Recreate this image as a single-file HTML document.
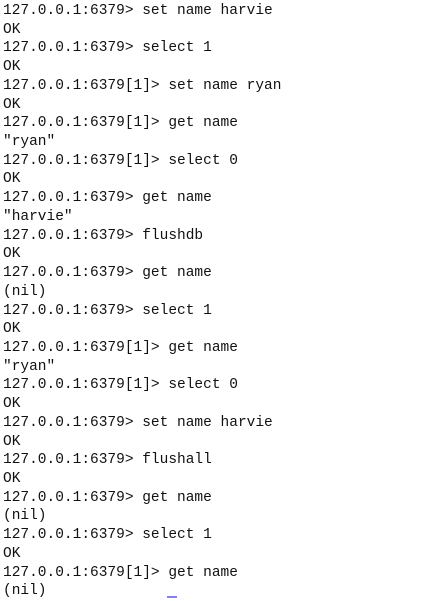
<!DOCTYPE html>
<html><head><style>
html,body{margin:0;padding:0;background:#fff;width:425px;height:599px;overflow:hidden}
pre{margin:0;position:absolute;left:3px;top:2px;font-family:"Liberation Mono",monospace;font-size:14.5px;line-height:18.72px;color:#111}
.cur{position:absolute;left:167px;top:596px;width:10px;height:2px;background:#8080ff}
</style></head><body>
<pre>127.0.0.1:6379&gt; set name harvie
OK
127.0.0.1:6379&gt; select 1
OK
127.0.0.1:6379[1]&gt; set name ryan
OK
127.0.0.1:6379[1]&gt; get name
"ryan"
127.0.0.1:6379[1]&gt; select 0
OK
127.0.0.1:6379&gt; get name
"harvie"
127.0.0.1:6379&gt; flushdb
OK
127.0.0.1:6379&gt; get name
(nil)
127.0.0.1:6379&gt; select 1
OK
127.0.0.1:6379[1]&gt; get name
"ryan"
127.0.0.1:6379[1]&gt; select 0
OK
127.0.0.1:6379&gt; set name harvie
OK
127.0.0.1:6379&gt; flushall
OK
127.0.0.1:6379&gt; get name
(nil)
127.0.0.1:6379&gt; select 1
OK
127.0.0.1:6379[1]&gt; get name
(nil)</pre>
<div class="cur"></div>
</body></html>
